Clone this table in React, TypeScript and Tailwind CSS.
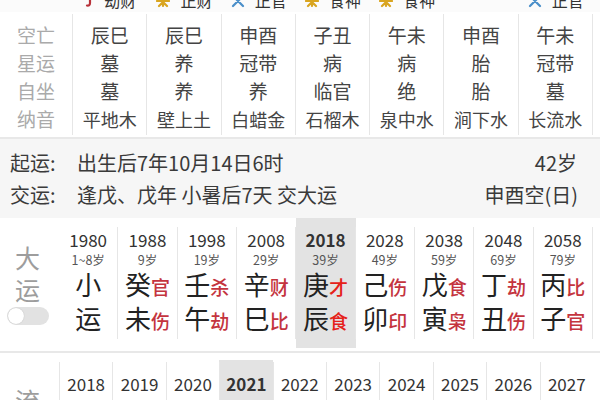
import React from "react";

const FONT = { fontFamily: '"Noto Sans CJK SC", "Noto Sans", sans-serif' };

const tableCols = [
  ["辰巳", "墓", "墓", "平地木"],
  ["辰巳", "养", "养", "壁上土"],
  ["申酉", "冠带", "养", "白蜡金"],
  ["子丑", "病", "临官", "石榴木"],
  ["午未", "病", "绝", "泉中水"],
  ["申酉", "胎", "胎", "涧下水"],
  ["午未", "冠带", "墓", "长流水"],
];
const labels = ["空亡", "星运", "自坐", "纳音"];

type DY = { y: string; a: string; s: string; sr?: string; b: string; br?: string; active?: boolean };
const dayun: DY[] = [
  { y: "1980", a: "1~8岁", s: "小", b: "运" },
  { y: "1988", a: "9岁", s: "癸", sr: "官", b: "未", br: "伤" },
  { y: "1998", a: "19岁", s: "壬", sr: "杀", b: "午", br: "劫" },
  { y: "2008", a: "29岁", s: "辛", sr: "财", b: "巳", br: "比" },
  { y: "2018", a: "39岁", s: "庚", sr: "才", b: "辰", br: "食", active: true },
  { y: "2028", a: "49岁", s: "己", sr: "伤", b: "卯", br: "印" },
  { y: "2038", a: "59岁", s: "戊", sr: "食", b: "寅", br: "枭" },
  { y: "2048", a: "69岁", s: "丁", sr: "劫", b: "丑", br: "伤" },
  { y: "2058", a: "79岁", s: "丙", sr: "比", b: "子", br: "官" },
];

const liunian = ["2018", "2019", "2020", "2021", "2022", "2023", "2024", "2025", "2026", "2027"];

function Icon({ kind }: { kind: "red" | "yellow" | "blue" }) {
  if (kind === "red")
    return (
      <svg width="10" height="16" viewBox="0 0 10 16">
        <path d="M6 0 L6 11 Q6 14 3 13.5" stroke="#b8323a" strokeWidth="2.2" fill="none" strokeLinecap="round" />
      </svg>
    );
  if (kind === "yellow")
    return (
      <svg width="14" height="16" viewBox="0 0 14 16">
        <path d="M7 2 L7 14 M1 9 L13 9 M3 14 L7 10 L11 14" stroke="#d9a520" strokeWidth="2.2" fill="none" strokeLinecap="round" />
      </svg>
    );
  return (
    <svg width="14" height="16" viewBox="0 0 14 16">
      <path d="M2 4 L12 14 M12 4 L2 14" stroke="#4a8fc9" strokeWidth="2.2" fill="none" strokeLinecap="round" />
    </svg>
  );
}

const strip: ({ k: "red" | "yellow" | "blue"; t: string } | null)[] = [
  { k: "red", t: "劫财" },
  { k: "yellow", t: "正财" },
  { k: "blue", t: "正官" },
  { k: "yellow", t: "食神" },
  { k: "yellow", t: "食神" },
  null,
  { k: "blue", t: "正官" },
];

function RedMark({ t, active }: { t: string; active?: boolean }) {
  return (
    <span className={`text-[19px] leading-[24px] font-medium ${active ? "text-[#e5221a] font-bold" : "text-[#c4343e]"}`}>{t}</span>
  );
}

export default function App() {
  return (
    <div className="w-[600px] h-[400px] overflow-hidden bg-white" style={FONT}>
      {/* cut-off top strip */}
      <div className="h-[12px] overflow-hidden flex items-start bg-[#fbfbfb]">
        <div className="w-[73px] shrink-0" />
        <div className="w-[520px] h-[16px] grid grid-cols-7 -mt-[8px]">
          {strip.map((s, i) => (
            <div key={i} className="h-[16px] flex items-end justify-center gap-[10px] text-[16px] leading-[16px] text-[#333]">
              {s && (
                <>
                  <Icon kind={s.k} />
                  <span>{s.t}</span>
                </>
              )}
            </div>
          ))}
        </div>
      </div>

      {/* table */}
      <div className="h-[125px] flex py-[2px]">
        <div className="w-[73px] shrink-0 border-r border-[#e6e6e6] pt-[7px] flex flex-col items-center text-[19px] leading-[28px] text-[#aaaaaa]">
          {labels.map((l) => (
            <div key={l}>{l}</div>
          ))}
        </div>
        <div className="w-[520px] grid grid-cols-7">
          {tableCols.map((c, i) => (
            <div key={i} className="border-r border-[#e6e6e6] pt-[7px] flex flex-col items-center text-[19px] leading-[28px] text-[#444]">
              {c.map((v, j) => (
                <div key={j} className={j === 3 ? "text-[18px]" : ""}>
                  {v}
                </div>
              ))}
            </div>
          ))}
        </div>
      </div>
      <div className="h-[2px] bg-[#e8e8e8]" />

      {/* 起运 section */}
      <div className="bg-[#f6f6f6] h-[79px] pt-[8px] px-[10px] text-[20px] leading-[32px] text-[#3a3a3a]">
        <div className="flex justify-between pr-[13px]">
          <div className="flex">
            <span className="w-[67px]">起运:</span>
            <span>出生后7年10月14日6时</span>
          </div>
          <span>42岁</span>
        </div>
        <div className="flex justify-between pr-[12px]">
          <div className="flex">
            <span className="w-[67px]">交运:</span>
            <span>逢戊、戊年 小暑后7天 交大运</span>
          </div>
          <span>申酉空(日)</span>
        </div>
      </div>

      {/* 大运 */}
      <div className="flex h-[130px]">
        <div className="w-[59px] shrink-0 flex flex-col items-center pt-[23px] pr-[4px] text-[25px] leading-[32px] text-[#9d9d9d]">
          <div>大</div>
          <div>运</div>
          <div className="mt-[2px] w-[42px] h-[18px] rounded-full bg-[#e2e2e2] relative">
            <div className="absolute left-[1px] top-[1px] w-[16px] h-[16px] rounded-full bg-white shadow-[0_0_1px_rgba(0,0,0,0.25)]" />
          </div>
        </div>
        <div className="w-[534px] grid grid-cols-9">
          {dayun.map((d) => (
            <div key={d.y} className={`py-[9px] ${d.active ? "bg-[#e3e3e3]" : ""}`}>
              <div className="border-r border-[#e6e6e6] h-full flex flex-col items-center pt-[3px]">
                <div className={`text-[17px] leading-[20px] text-[#333] ${d.active ? "font-bold" : ""}`}>{d.y}</div>
                <div className="text-[12.5px] leading-[14px] mt-[3px] text-[#555]">{d.a}</div>
                <div className="flex items-baseline">
                  <span className="text-[26px] leading-[34px] text-[#222]">{d.s}</span>
                  {d.sr && <RedMark t={d.sr} active={d.active} />}
                </div>
                <div className="flex items-baseline">
                  <span className="text-[26px] leading-[34px] text-[#222]">{d.b}</span>
                  {d.br && <RedMark t={d.br} active={d.active} />}
                </div>
              </div>
            </div>
          ))}
        </div>
      </div>
      <div className="h-[3px]" />
      <div className="h-[2px] bg-[#e8e8e8]" />

      {/* 流年 */}
      <div className="flex h-[60px]">
        <div className="w-[59px] shrink-0 flex flex-col items-center pt-[31px] pr-[4px] text-[25px] leading-[32px] text-[#9d9d9d]">
          <div>流</div>
        </div>
        <div className="w-[534px] grid grid-cols-10 pt-[7px]">
          {liunian.map((y) => (
            <div key={y} className={y === "2021" ? "bg-[#e3e3e3]" : ""}>
              <div className="border-l border-[#e6e6e6] h-full mt-[2px] flex justify-center pt-[10px]">
                <span className={`text-[17px] leading-[24px] text-[#333] ${y === "2021" ? "font-bold" : ""}`}>{y}</span>
              </div>
            </div>
          ))}
        </div>
      </div>
    </div>
  );
}
